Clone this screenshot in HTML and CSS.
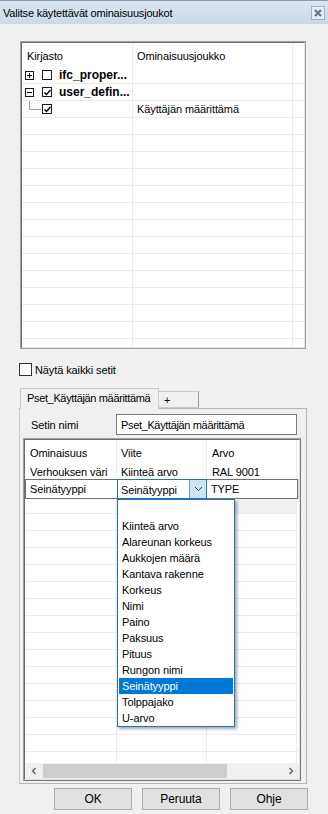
FILE: index.html
```html
<!DOCTYPE html>
<html>
<head>
<meta charset="utf-8">
<link rel="stylesheet" href="styles.css">
</head>
<body>
<div class="window">
  <div class="titlebar">
    <span class="title">Valitse käytettävät ominaisuusjoukot</span>
    <span class="close"><svg width="12" height="12" viewBox="0 0 12 12"><path d="M3 3 L9 9 M9 3 L3 9" stroke="#6b7683" stroke-width="2.2" fill="none"/></svg></span>
  </div>

  <div class="tree-panel"><div class="tree-inner">
    <div class="trow thead">
      <div class="tc c1">Kirjasto</div><div class="tc c2">Ominaisuusjoukko</div><div class="tc c3"></div>
    </div>
    <div class="trow">
      <div class="tc c1 node">
        <span class="exp"><svg width="9" height="9" viewBox="0 0 9 9"><path d="M2 4.5 H7 M4.5 2 V7" stroke="#000" stroke-width="1" fill="none" shape-rendering="crispEdges"/></svg></span>
        <span class="cbx"></span>
        <b>ifc_proper...</b>
      </div><div class="tc c2"></div><div class="tc c3"></div>
    </div>
    <div class="trow">
      <div class="tc c1 node">
        <span class="exp"><svg width="9" height="9" viewBox="0 0 9 9"><path d="M2 4.5 H7" stroke="#000" stroke-width="1" fill="none" shape-rendering="crispEdges"/></svg></span>
        <span class="cbx"><svg width="9" height="9" viewBox="0 0 9 9"><path d="M1.5 4.5 L3.5 6.5 L7.5 2" stroke="#000" stroke-width="1.4" fill="none"/></svg></span>
        <b>user_defin...</b>
      </div><div class="tc c2"></div><div class="tc c3"></div>
    </div>
    <div class="trow">
      <div class="tc c1 node">
        <span class="branch"></span>
        <span class="cbx"><svg width="9" height="9" viewBox="0 0 9 9"><path d="M1.5 4.5 L3.5 6.5 L7.5 2" stroke="#000" stroke-width="1.4" fill="none"/></svg></span>
      </div><div class="tc c2">Käyttäjän määrittämä</div><div class="tc c3"></div>
    </div>
    <div class="trow"><div class="tc c1"></div><div class="tc c2"></div><div class="tc c3"></div></div>
    <div class="trow"><div class="tc c1"></div><div class="tc c2"></div><div class="tc c3"></div></div>
    <div class="trow"><div class="tc c1"></div><div class="tc c2"></div><div class="tc c3"></div></div>
    <div class="trow"><div class="tc c1"></div><div class="tc c2"></div><div class="tc c3"></div></div>
    <div class="trow"><div class="tc c1"></div><div class="tc c2"></div><div class="tc c3"></div></div>
    <div class="trow"><div class="tc c1"></div><div class="tc c2"></div><div class="tc c3"></div></div>
    <div class="trow"><div class="tc c1"></div><div class="tc c2"></div><div class="tc c3"></div></div>
    <div class="trow"><div class="tc c1"></div><div class="tc c2"></div><div class="tc c3"></div></div>
    <div class="trow"><div class="tc c1"></div><div class="tc c2"></div><div class="tc c3"></div></div>
    <div class="trow"><div class="tc c1"></div><div class="tc c2"></div><div class="tc c3"></div></div>
    <div class="trow"><div class="tc c1"></div><div class="tc c2"></div><div class="tc c3"></div></div>
    <div class="trow"><div class="tc c1"></div><div class="tc c2"></div><div class="tc c3"></div></div>
    <div class="trow"><div class="tc c1"></div><div class="tc c2"></div><div class="tc c3"></div></div>
    <div class="trow"><div class="tc c1"></div><div class="tc c2"></div><div class="tc c3"></div></div>
    <div class="trow"><div class="tc c1"></div><div class="tc c2"></div><div class="tc c3"></div></div>
  </div></div>

  <div class="show-all"><span class="cb13"></span><span>Näytä kaikki setit</span></div>

  <div class="tabs">
    <div class="tab active">Pset_Käyttäjän määrittämä</div>
    <div class="tab plus">+</div>
  </div>
  <div class="tabpanel">
    <div class="name-row">
      <span class="name-label">Setin nimi</span>
      <div class="name-input">Pset_Käyttäjän määrittämä</div>
    </div>
    <div class="pgrid"><div class="pgrid-inner">
      <div class="prow phead">
        <div class="pc p1">Ominaisuus</div><div class="pc p2">Viite</div><div class="pc p3">Arvo</div><div class="pc p4"></div>
      </div>
      <div class="prow pfirst">
        <div class="pc p1">Verhouksen väri</div><div class="pc p2">Kiinteä arvo</div><div class="pc p3">RAL 9001</div><div class="pc p4"></div>
      </div>
      <div class="prow pedit">
        <div class="pc p1 ecell">Seinätyyppi</div>
        <div class="pc p2 combo">
          <span class="combo-text">Seinätyyppi</span>
          <span class="combo-btn"><svg width="9" height="6" viewBox="0 0 9 6"><path d="M1 1 L4.5 4.5 L8 1" stroke="#444" stroke-width="1" fill="none"/></svg></span>
          <div class="dropdown">
            <div class="opt"></div>
            <div class="opt">Kiinteä arvo</div>
            <div class="opt">Alareunan korkeus</div>
            <div class="opt">Aukkojen määrä</div>
            <div class="opt">Kantava rakenne</div>
            <div class="opt">Korkeus</div>
            <div class="opt">Nimi</div>
            <div class="opt">Paino</div>
            <div class="opt">Paksuus</div>
            <div class="opt">Pituus</div>
            <div class="opt">Rungon nimi</div>
            <div class="opt sel">Seinätyyppi</div>
            <div class="opt">Tolppajako</div>
            <div class="opt">U-arvo</div>
          </div>
        </div>
        <div class="pc p3 ecell">TYPE</div><div class="pc p4"></div>
      </div>
      <div class="prow pstrip">
        <div class="pc p1"></div><div class="pc p2"></div><div class="pc p3 grey"></div><div class="pc p4"></div>
      </div>
      <div class="prows">
        <div class="prow blank"><div class="pc p1"></div><div class="pc p2"></div><div class="pc p3"></div><div class="pc p4"></div></div>
        <div class="prow blank"><div class="pc p1"></div><div class="pc p2"></div><div class="pc p3"></div><div class="pc p4"></div></div>
        <div class="prow blank"><div class="pc p1"></div><div class="pc p2"></div><div class="pc p3"></div><div class="pc p4"></div></div>
        <div class="prow blank"><div class="pc p1"></div><div class="pc p2"></div><div class="pc p3"></div><div class="pc p4"></div></div>
        <div class="prow blank"><div class="pc p1"></div><div class="pc p2"></div><div class="pc p3"></div><div class="pc p4"></div></div>
        <div class="prow blank"><div class="pc p1"></div><div class="pc p2"></div><div class="pc p3"></div><div class="pc p4"></div></div>
        <div class="prow blank"><div class="pc p1"></div><div class="pc p2"></div><div class="pc p3"></div><div class="pc p4"></div></div>
        <div class="prow blank"><div class="pc p1"></div><div class="pc p2"></div><div class="pc p3"></div><div class="pc p4"></div></div>
        <div class="prow blank"><div class="pc p1"></div><div class="pc p2"></div><div class="pc p3"></div><div class="pc p4"></div></div>
        <div class="prow blank"><div class="pc p1"></div><div class="pc p2"></div><div class="pc p3"></div><div class="pc p4"></div></div>
        <div class="prow blank"><div class="pc p1"></div><div class="pc p2"></div><div class="pc p3"></div><div class="pc p4"></div></div>
        <div class="prow blank"><div class="pc p1"></div><div class="pc p2"></div><div class="pc p3"></div><div class="pc p4"></div></div>
        <div class="prow blank"><div class="pc p1"></div><div class="pc p2"></div><div class="pc p3"></div><div class="pc p4"></div></div>
        <div class="prow blank"><div class="pc p1"></div><div class="pc p2"></div><div class="pc p3"></div><div class="pc p4"></div></div>
        <div class="prow blank"><div class="pc p1"></div><div class="pc p2"></div><div class="pc p3"></div><div class="pc p4"></div></div>
      </div>
      <div class="hscroll">
        <span class="arrow"><svg width="6" height="8" viewBox="0 0 6 8"><path d="M4.5 1 L1.5 4 L4.5 7" stroke="#606060" stroke-width="1.4" fill="none"/></svg></span>
        <span class="track"><span class="thumb"></span></span>
        <span class="arrow"><svg width="6" height="8" viewBox="0 0 6 8"><path d="M1.5 1 L4.5 4 L1.5 7" stroke="#606060" stroke-width="1.4" fill="none"/></svg></span>
      </div>
    </div></div>
  </div>

  <div class="buttons">
    <div class="btn">OK</div>
    <div class="btn">Peruuta</div>
    <div class="btn">Ohje</div>
  </div>
</div>
</body>
</html>
```

FILE: styles.css
```css
* { box-sizing: border-box; }
html, body { margin: 0; padding: 0; }
body {
  background: #f0f0f0;
  font-family: "Liberation Sans", Arial, sans-serif;
  font-size: 11px;
  letter-spacing: -0.1px;
  color: #000;
  width: 328px;
  height: 814px;
  overflow: hidden;
}
.window { width: 328px; height: 814px; }

.titlebar {
  height: 24px;
  border-top: 1px solid #8d9bab;
  background: linear-gradient(#dce6f2, #c9d8e9);
  display: flex;
  align-items: center;
  justify-content: space-between;
  padding: 0 3px 0 3px;
}
.title { font-size: 11px; letter-spacing: -0.2px; }
.close {
  width: 14px; height: 14px;
  border: 1px solid #a3b1c0;
  background: #e6edf5;
  display: flex; align-items: center; justify-content: center;
}

/* tree panel */
.tree-panel {
  margin: 17px 0 0 20px;
  width: 286px;
  height: 308px;
  border: 1px solid #a0a0a0;
  background: #fff;
}
.tree-inner {
  width: 100%; height: 100%;
  border-left: 1px solid #6d6d6d;
  border-top: 1px solid #6d6d6d;
  border-right: 1px solid #e3e3e3;
  border-bottom: 1px solid #e3e3e3;
  overflow: hidden;
  background: #fff;
}
.trow { display: flex; height: 17px; }
.trow.thead { height: 24px; }
.tc {
  height: 100%;
  border-right: 1px solid #ececec;
  border-bottom: 1px solid #ececec;
  display: flex; align-items: center;
  white-space: nowrap; overflow: hidden;
}
.thead .tc { border-bottom: none; padding-top: 2px; }
.c1 { width: 111px; padding-left: 5px; }
.c2 { width: 160px; padding-left: 4px; }
.c3 { flex: 1; border-right: none; }
.node { padding-left: 3px; }
.node b { font-size: 12px; margin-left: 7px; letter-spacing: 0; }
.exp {
  width: 9px; height: 9px;
  border: 1px solid #1a1a1a;
  display: flex; align-items: center; justify-content: center;
  margin-right: 8px;
  overflow: hidden;
}
.exp svg { flex: none; }
.cbx {
  width: 10px; height: 10px;
  border: 1px solid #1a1a1a;
  background: #fff;
  display: flex; align-items: center; justify-content: center;
  overflow: hidden;
}
.cbx svg { flex: none; }
.branch {
  width: 12px;
  height: 12px;
  margin-left: 4px;
  margin-right: 1px;
  align-self: flex-start;
  margin-top: -3px;
  border-left: 1px solid #a0a0a0;
  border-bottom: 1px solid #a0a0a0;
}

/* checkbox */
.show-all {
  margin: 14px 0 0 19px;
  display: flex; align-items: center;
  height: 13px;
}
.cb13 {
  width: 13px; height: 13px;
  border: 1px solid #333;
  background: #fff;
  margin-right: 3px;
}

/* tabs */
.tabs {
  margin: 12px 0 0 20px;
  display: flex;
  align-items: flex-end;
  height: 20px;
  position: relative;
  z-index: 2;
}
.tab {
  flex: none;
  border: 1px solid #c9c9c9;
  background: #f0f0f0;
  display: flex; align-items: center;
  white-space: nowrap;
  overflow: hidden;
}
.tab.active {
  height: 21px;
  margin-bottom: -1px;
  border-bottom: none;
  padding: 0 0 2px 6px;
  width: 139px;
  letter-spacing: -0.35px;
}
.tab.plus {
  height: 17px;
  width: 40px;
  border-left: none;
  border-right-color: #9c9c9c;
  padding-left: 5px;
}

.tabpanel {
  margin-left: 19px;
  width: 288px;
  height: 376px;
  border: 1px solid #b5b5b5;
  border-left-color: #c9c9c9;
  padding: 5px 0 0 3px;
}
.name-row { display: flex; align-items: center; height: 21px; }
.name-label { width: 93px; padding-left: 8px; }
.name-input {
  width: 181px; height: 21px;
  border: 1px solid #7a7a7a;
  background: #fff;
  display: flex; align-items: center;
  padding-left: 4px;
  letter-spacing: -0.35px;
}

.pgrid {
  margin-top: 3px;
  width: 278px;
  height: 343px;
  border: 1px solid #a0a0a0;
  border-bottom-color: #7a7a7a;
  border-right-color: #7a7a7a;
  background: #fff;
}
.pgrid-inner {
  width: 100%; height: 100%;
  border-left: 1px solid #6d6d6d;
  border-top: 1px solid #6d6d6d;
  border-right: 1px solid #dcdcdc;
  border-bottom: 1px solid #dcdcdc;
  display: flex; flex-direction: column;
}
.prow { display: flex; flex: none; }
.pc {
  height: 100%;
  display: flex; align-items: center;
  white-space: nowrap;
  border-right: 1px solid #ececec;
}
.p1 { width: 92px; padding-left: 5px; }
.p2 { width: 90px; padding-left: 4px; }
.p3 { width: 90px; padding-left: 5px; }
.p4 { flex: 1; border-right: none; }
.phead { height: 23px; }
.phead .pc { padding-top: 2px; }
.pfirst { height: 16px; }
.pfirst .pc { padding-top: 1px; }
.pedit { height: 20px; }
.ecell { border: 1px solid #707070; }
.pedit .p1 { border-right: none; padding-left: 4px; }
.combo {
  position: relative;
  border: 1px solid #2b6fb8;
  background: #fff;
  padding: 0 0 0 3px;
  justify-content: space-between;
  z-index: 5;
}
.combo-text { padding-top: 1px; }
.combo-btn {
  width: 17px; height: 100%;
  background: #cce4f7;
  border-left: 1px solid #5d9bd8;
  display: flex; align-items: center; justify-content: center;
}
.pedit .p3 { border-left: none; padding-left: 4px; width: 91px; }
.pedit .p4 { border-left: 1px solid #dcdcdc; }
.pstrip { height: 15px; border-bottom: 1px solid #ececec; }
.pstrip .grey { background: #f0f0f0; }
.prows { flex: 1; overflow: hidden; }
.prow.blank { height: 17px; border-bottom: 1px solid #ececec; }

.dropdown {
  position: absolute;
  left: -1px;
  top: 19px;
  width: 118px;
  height: 228px;
  background: #fff;
  border: 1px solid #2173c4;
  box-shadow: 2px 2px 3px rgba(0,0,0,0.35);
  padding: 2px 0 0 0;
  z-index: 10;
}
.opt {
  height: 16px;
  line-height: 16px;
  padding-left: 3px;
  margin: 0 1px;
}
.opt.sel { background: #0078d7; color: #fff; }

.hscroll {
  height: 16px;
  flex: none;
  background: #f0f0f0;
  display: flex; align-items: center;
}
.arrow {
  width: 17px; height: 16px;
  display: flex; align-items: center; justify-content: center;
}
.track { flex: 1; height: 16px; display: flex; align-items: center; }
.thumb { width: 184px; height: 14px; background: #cdcdcd; margin-left: 1px; }

.buttons {
  display: flex;
  justify-content: flex-end;
  gap: 10px;
  padding-right: 20px;
  margin-top: 4px;
}
.btn {
  width: 78px; height: 22px;
  border: 1px solid #adadad;
  background: #e1e1e1;
  display: flex; align-items: center; justify-content: center;
  font-size: 12px;
}
```
